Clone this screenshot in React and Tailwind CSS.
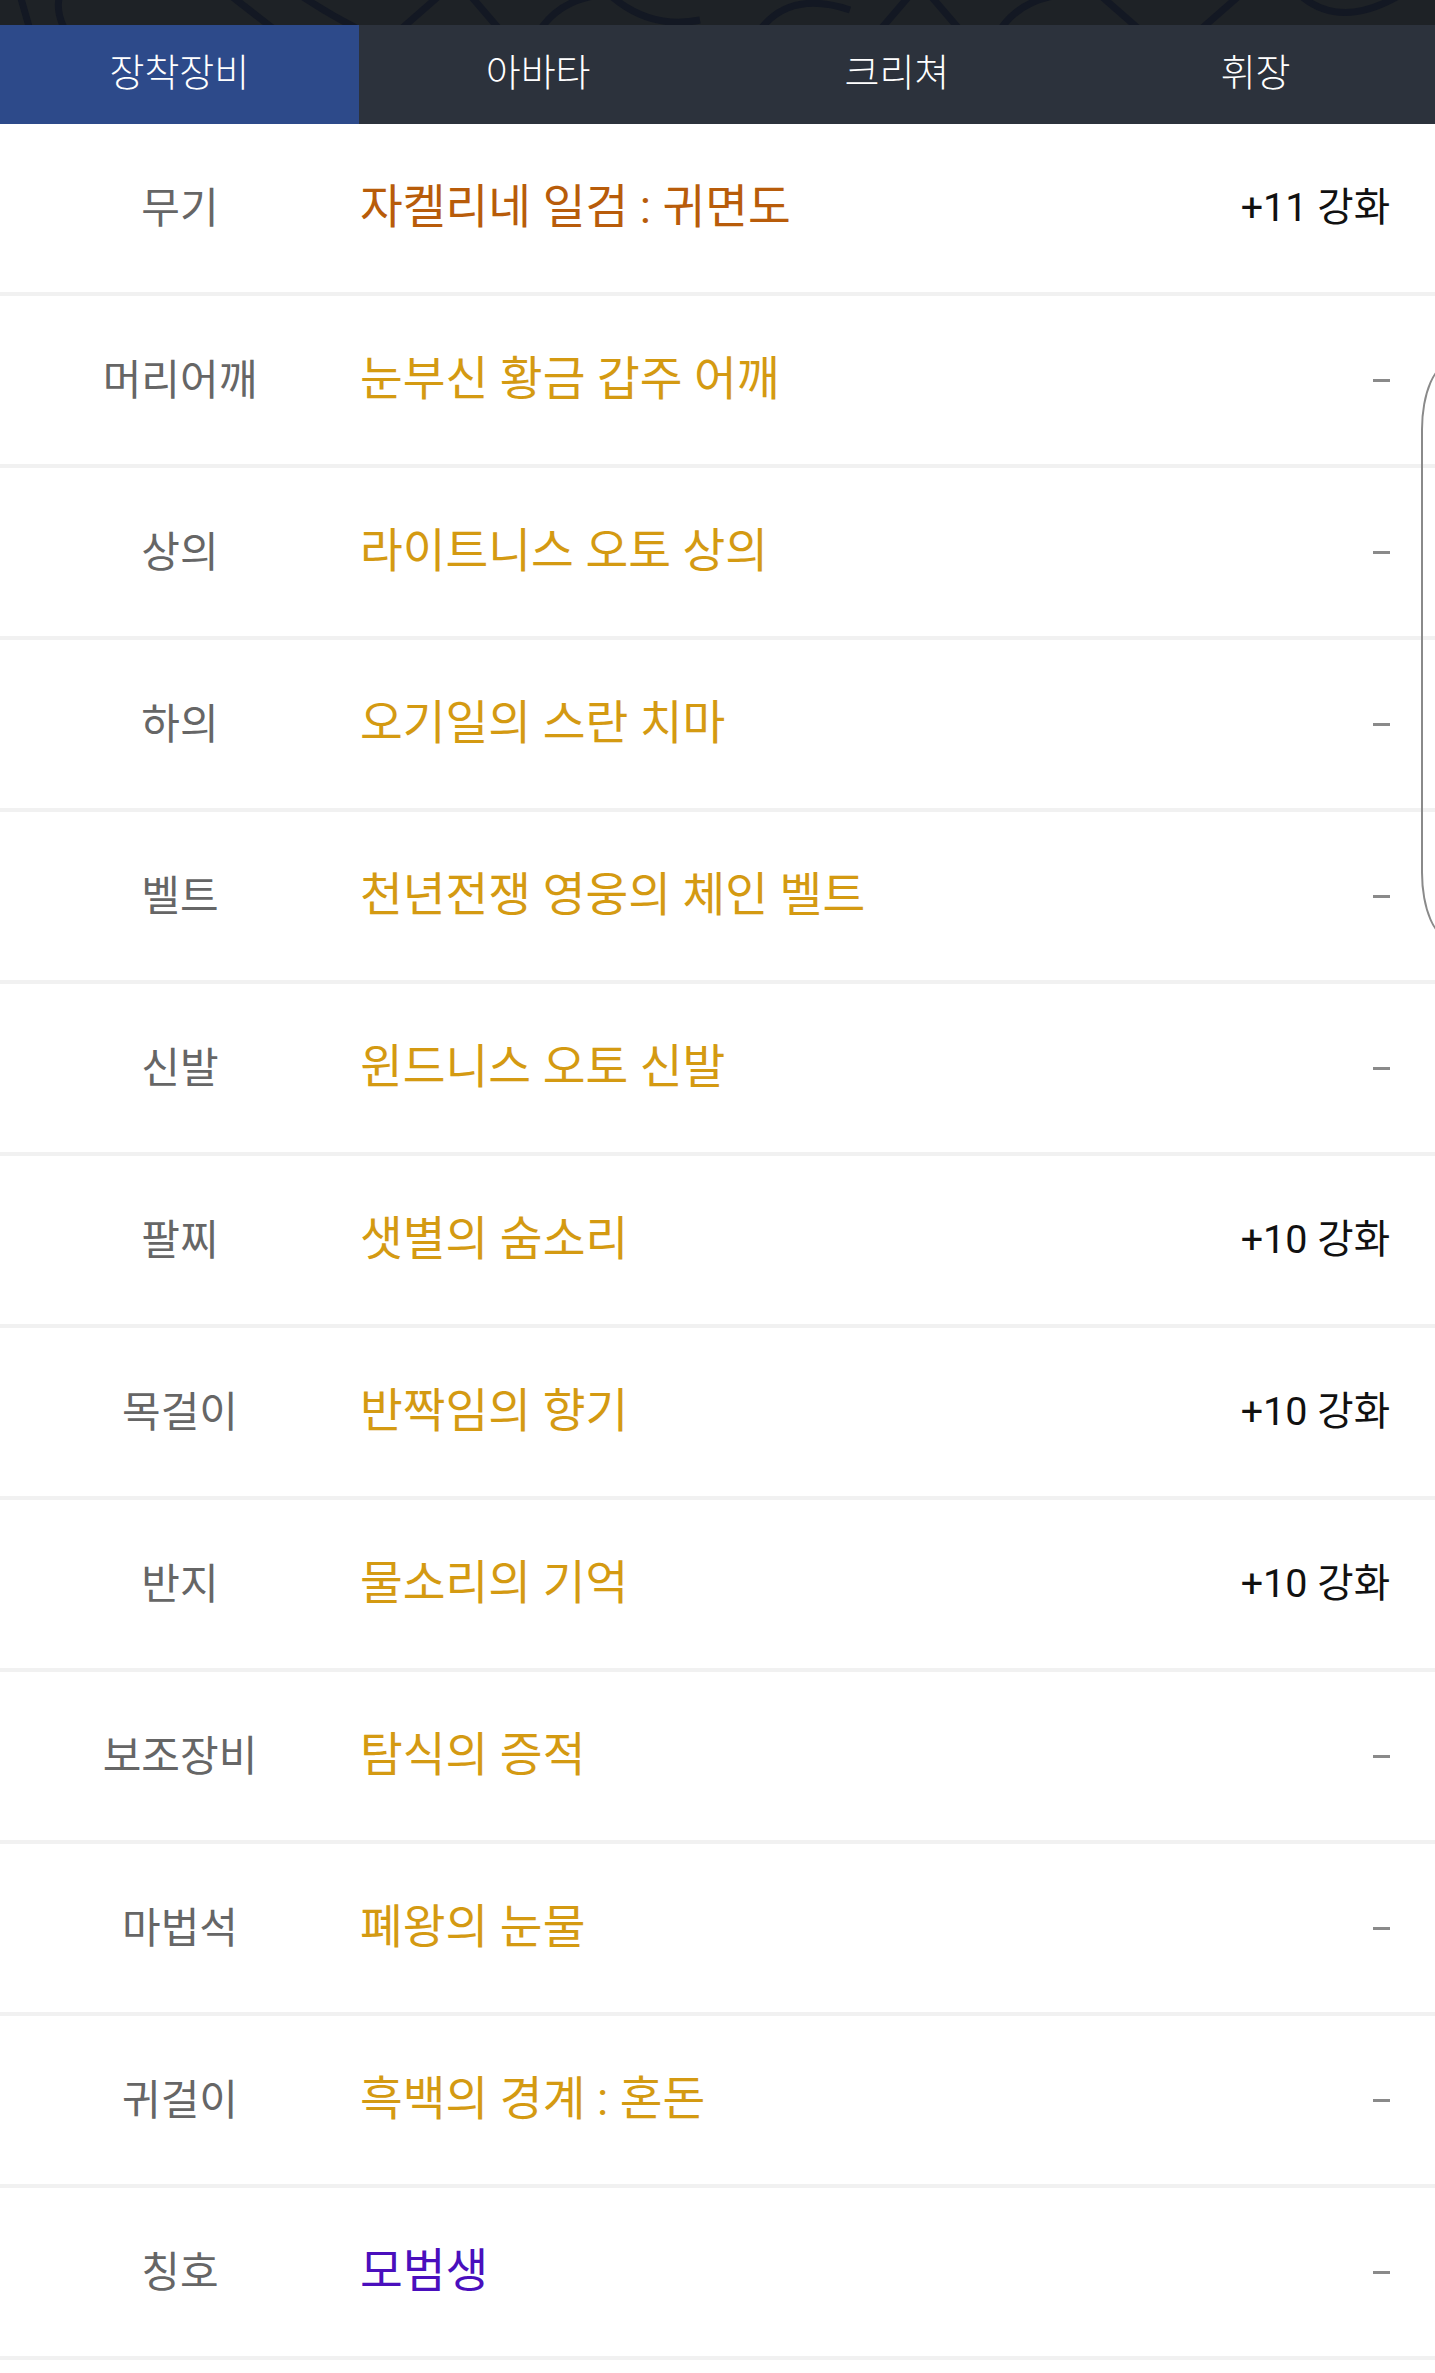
import React from "react";

const rows = [
  { label: "무기", name: "자켈리네 일검 : 귀면도", color: "text-[#b85c0a]", value: "+11 강화" },
  { label: "머리어깨", name: "눈부신 황금 갑주 어깨", color: "text-[#d49a12]", value: null },
  { label: "상의", name: "라이트니스 오토 상의", color: "text-[#d49a12]", value: null },
  { label: "하의", name: "오기일의 스란 치마", color: "text-[#d49a12]", value: null },
  { label: "벨트", name: "천년전쟁 영웅의 체인 벨트", color: "text-[#d49a12]", value: null },
  { label: "신발", name: "윈드니스 오토 신발", color: "text-[#d49a12]", value: null },
  { label: "팔찌", name: "샛별의 숨소리", color: "text-[#d49a12]", value: "+10 강화" },
  { label: "목걸이", name: "반짝임의 향기", color: "text-[#d49a12]", value: "+10 강화" },
  { label: "반지", name: "물소리의 기억", color: "text-[#d49a12]", value: "+10 강화" },
  { label: "보조장비", name: "탐식의 증적", color: "text-[#d49a12]", value: null },
  { label: "마법석", name: "폐왕의 눈물", color: "text-[#d49a12]", value: null },
  { label: "귀걸이", name: "흑백의 경계 : 혼돈", color: "text-[#d49a12]", value: null },
  { label: "칭호", name: "모범생", color: "text-[#4a0fbd]", value: null },
];

const tabs = ["장착장비", "아바타", "크리쳐", "휘장"];

export default function App() {
  return (
    <div
      className="relative w-[1435px] min-h-[2373px] bg-white overflow-hidden"
      style={{ fontFamily: "Roboto, 'Noto Sans CJK KR', sans-serif" }}
    >
      {/* top decorative band */}
      <div className="h-[25px] bg-[#1e2226] overflow-hidden">
        <svg width="1435" height="25" viewBox="0 0 1435 25" fill="none">
          <g stroke="#131823" strokeWidth="7">
            <path d="M20 -5 L30 30" />
            <path d="M60 -5 Q55 10 65 30" />
            <path d="M230 -5 L275 30" />
            <path d="M300 -5 Q330 15 360 30" />
            <path d="M400 30 L440 -5" />
            <path d="M470 -5 L500 30" />
            <path d="M540 30 Q560 0 600 -5" />
            <path d="M610 -5 Q650 30 700 20" />
            <path d="M760 30 Q790 -10 850 10" />
            <path d="M880 30 L910 -5" />
            <path d="M930 -5 L960 30" />
            <path d="M1000 30 Q1020 0 1060 -5" />
            <path d="M1100 -5 L1140 30" />
            <path d="M1200 30 L1240 -5" />
            <path d="M1300 -5 Q1340 30 1400 -5" />
          </g>
        </svg>
      </div>

      {/* tabs */}
      <div className="grid grid-cols-4 h-[99px] bg-[#2c323c]">
        {tabs.map((t, i) => (
          <div
            key={t}
            className={`flex items-center justify-center text-white text-[38px] font-light pb-[3px] ${
              i === 0 ? "bg-[#2d4a8a]" : ""
            }`}
          >
            {t}
          </div>
        ))}
      </div>

      {/* rows */}
      <div className="flex flex-col">
        {rows.map((r) => (
          <div key={r.label} className="flex items-center h-[172px] border-b-4 border-[#f1f1f1]">
            <div className="w-[360px] text-center text-[42px] text-[#666666]">{r.label}</div>
            <div className={`flex-1 text-[46.5px] ${r.color}`}>{r.name}</div>
            <div className="pr-[45px]">
              {r.value ? (
                <span className="text-[39.5px] text-[#111111]">{r.value}</span>
              ) : (
                <span className="block w-[17px] h-[3px] bg-[#8a8a8a]" />
              )}
            </div>
          </div>
        ))}
      </div>

      {/* edge overlay outline */}
      <div className="absolute left-[1421px] top-[362px] w-[60px] h-[578px] border-2 border-[#8a8a8a] rounded-[40px_/_90px]" />
    </div>
  );
}
